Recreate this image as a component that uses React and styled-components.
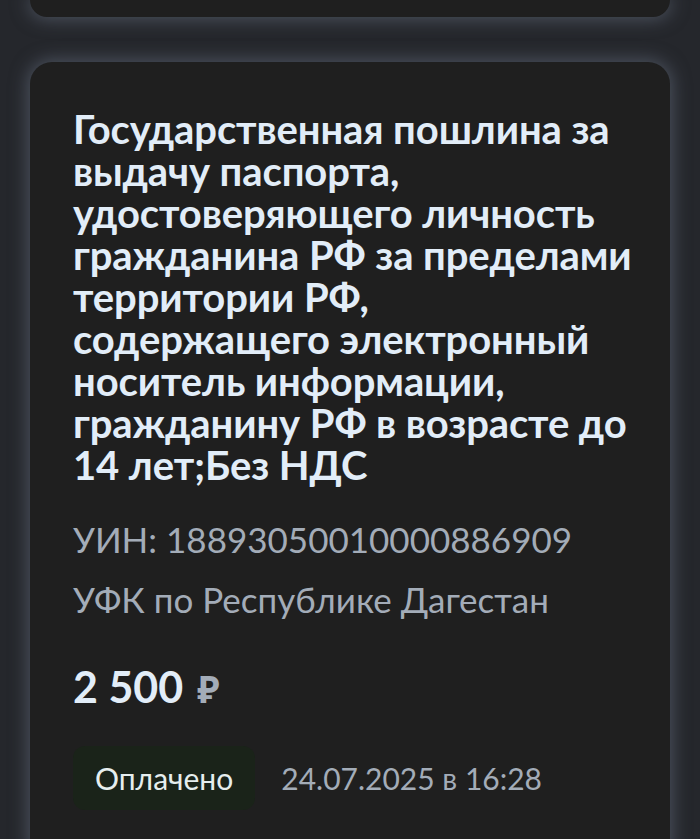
import React from "react";
import styled, { createGlobalStyle } from "styled-components";

const Global = createGlobalStyle`
  html, body {
    margin: 0;
    padding: 0;
    background: #25272c;
    overflow: hidden;
  }
  body {
    font-family: Lato, "Noto Sans", sans-serif;
  }
`;

const Page = styled.div`
  width: 700px;
  height: 839px;
  overflow: hidden;
  background: #25272c;
  display: flex;
  flex-direction: column;
  gap: 45px;
  padding: 0 30px;
  box-sizing: border-box;
`;

const Card = styled.div`
  background: #1f1f1f;
  border-radius: 22px;
  box-shadow: 0 0 18px 2px rgba(110, 120, 138, 0.55);
  flex-shrink: 0;
`;

const TopCard = styled(Card)`
  height: 17px;
  border-top-left-radius: 0;
  border-top-right-radius: 0;
`;

const MainCard = styled(Card)`
  padding: 46px 20px 40px 43px;
  flex: 1;
  border-bottom-left-radius: 0;
  border-bottom-right-radius: 0;
`;

const Title = styled.h2`
  margin: 0;
  font-size: 40px;
  line-height: 42px;
  font-weight: 700;
  color: #e2edf8;
  white-space: nowrap;
  letter-spacing: -0.1px;
`;

const Meta = styled.div`
  margin-top: ${p => p.$top || 0}px;
  font-size: 35px;
  line-height: 40px;
  color: #a3acb8;
`;

const Amount = styled.div`
  margin-top: 43px;
  font-size: 43px;
  line-height: 50px;
  font-weight: 700;
  color: #e2edf8;
  display: flex;
  align-items: baseline;
  span {
    font-size: 37px;
    color: #a3acb8;
    margin-left: 14px;
  }
`;

const StatusRow = styled.div`
  margin-top: 32px;
  display: flex;
  align-items: center;
  gap: 26px;
`;

const Badge = styled.div`
  background: #1a2319;
  border-radius: 12px;
  height: 64px;
  padding: 0 22px;
  display: flex;
  align-items: center;
  font-size: 30px;
  color: #e6eeee;
`;

const DateText = styled.div`
  font-size: 30px;
  color: #a3acb8;
`;

const titleLines = [
  "Государственная пошлина за",
  "выдачу паспорта,",
  "удостоверяющего личность",
  "гражданина РФ за пределами",
  "территории РФ,",
  "содержащего электронный",
  "носитель информации,",
  "гражданину РФ в возрасте до",
  "14 лет;Без НДС",
];

export default function App() {
  return (
    <>
      <Global />
      <Page>
        <TopCard />
        <MainCard>
          <Title>
            {titleLines.map((line, i) => (
              <React.Fragment key={i}>
                {line}
                {i < titleLines.length - 1 && <br />}
              </React.Fragment>
            ))}
          </Title>
          <Meta $top={33}>УИН: 18893050010000886909</Meta>
          <Meta $top={20}>УФК по Республике Дагестан</Meta>
          <Amount>
            2 500<span>₽</span>
          </Amount>
          <StatusRow>
            <Badge>Оплачено</Badge>
            <DateText>24.07.2025 в 16:28</DateText>
          </StatusRow>
        </MainCard>
      </Page>
    </>
  );
}
